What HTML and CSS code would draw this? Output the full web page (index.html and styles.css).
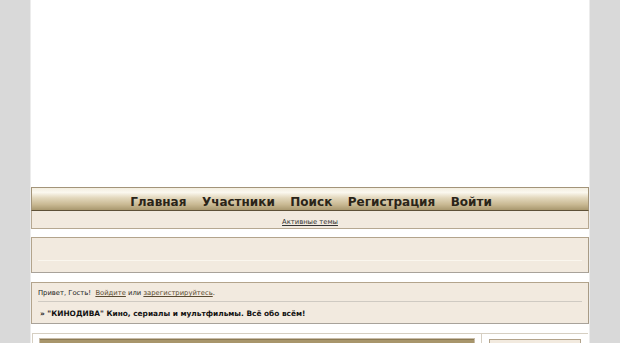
FILE: index.html
```html
<!DOCTYPE html>
<html lang="ru">
<head>
  <meta charset="UTF-8">
  <title>КИНОДИВА</title>
  <link rel="stylesheet" href="styles.css">
</head>
<body>
  <div class="wrapper">
    <div class="banner"></div>

    <div class="navbar">
      <a href="#">Главная</a>
      <a href="#">Участники</a>
      <a href="#">Поиск</a>
      <a href="#">Регистрация</a>
      <a href="#">Войти</a>
    </div>
    <div class="subnav">
      <a href="#">Активные темы</a>
    </div>

    <div class="block announce">
      <div class="announce-line"></div>
    </div>

    <div class="block welcome">
      <div class="welcome-top">
        Привет, Гость!&nbsp; <a href="#">Войдите</a> или <a href="#">зарегистрируйтесь</a>.
      </div>
      <div class="welcome-title">» "КИНОДИВА" Кино, сериалы и мультфильмы. Всё обо всём!</div>
    </div>

    <div class="columns">
      <div class="col-main">
        <div class="forum-box">
          <div class="forum-head"></div>
        </div>
      </div>
      <div class="col-side">
        <div class="side-box"></div>
      </div>
    </div>
  </div>
</body>
</html>
```

FILE: styles.css
```css
* {
  margin: 0;
  padding: 0;
  box-sizing: border-box;
}

body {
  background-color: #d9d9d9;
  font-family: "DejaVu Sans", Verdana, sans-serif;
  color: #222;
  overflow: hidden;
}

.wrapper {
  width: 560px;
  margin: 0 auto;
  background-color: #fff;
  border-left: 1px solid #ececec;
  border-right: 1px solid #ececec;
  min-height: 343px;
}

.banner {
  height: 187px;
  background-color: #fff;
}

.navbar {
  height: 24px;
  border: 1px solid #a39479;
  border-bottom-color: #5e5138;
  background: linear-gradient(to bottom, #f3eee0 0%, #fbf8ef 20%, #e2d7bc 45%, #c9b993 75%, #a9986f 100%);
  display: flex;
  justify-content: center;
  align-items: center;
  gap: 15.5px;
  padding-left: 2px;
}

.navbar a {
  font-size: 12px;
  font-weight: bold;
  color: #2a2418;
  text-decoration: none;
  line-height: 20px;
  padding-top: 5px;
}

.subnav {
  height: 18px;
  background-color: #f2eadf;
  border: 1px solid #b6a892;
  border-top: none;
  text-align: center;
  line-height: 15px;
}

.subnav a {
  font-size: 6.8px;
  color: #333;
}

.block {
  background-color: #f2eadf;
  border: 1px solid #b3a48c;
  border-right-color: #a89b86;
  border-bottom-color: #a8a29a;
}

.announce {
  margin-top: 8px;
  height: 36px;
  padding: 22px 6px 0 6px;
}

.announce-line {
  height: 1px;
  background-color: #faf6ee;
}

.welcome {
  margin-top: 9px;
  height: 42px;
  padding: 0 6px;
}

.welcome-top {
  font-size: 6.8px;
  color: #222;
  height: 19px;
  line-height: 20px;
  border-bottom: 1px solid #cfcac2;
}

.welcome-top a {
  color: #5a4a30;
}

.welcome-title {
  font-size: 7.4px;
  font-weight: bold;
  color: #111;
  line-height: 23px;
  padding-left: 2px;
}

.columns {
  margin: 9px 1px 0 1px;
  display: flex;
  border-top: 1px solid #d6cfc2;
  height: 20px;
}

.col-main {
  width: 450px;
  border-left: 1px solid #d6cfc2;
  border-right: 1px solid #d6cfc2;
  padding: 4px 6px 0 6px;
}

.forum-box {
  width: 436px;
  height: 14px;
  border: 1px solid #c8bca8;
  border-bottom: none;
}

.forum-head {
  height: 13px;
  background-color: #a8966c;
  border-top: 1px solid #8c7b55;
}

.col-side {
  flex: 1;
  padding: 5px 7px 0 7px;
}

.side-box {
  height: 10px;
  border: 1px solid #b3a48c;
  border-bottom: none;
  background-color: #f2eadf;
}
```
